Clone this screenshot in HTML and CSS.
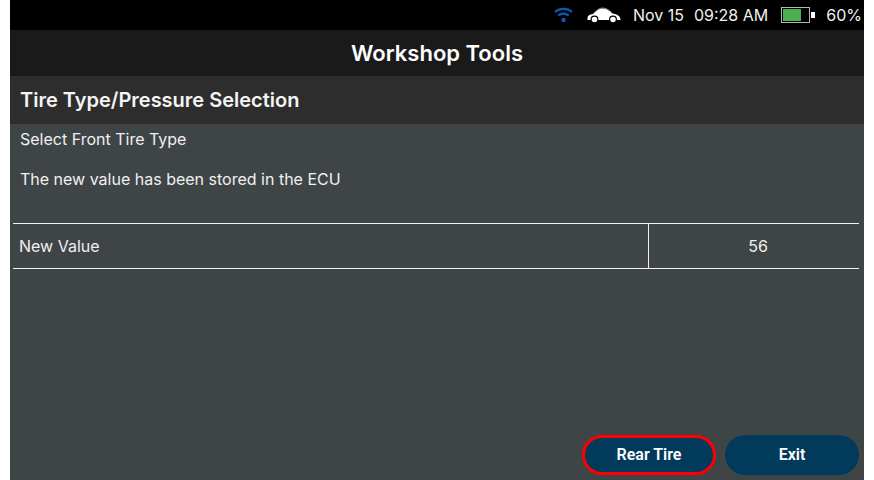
FILE: index.html
```html
<!DOCTYPE html>
<html lang="en">
<head>
    <meta charset="UTF-8">
    <meta name="viewport" content="width=device-width, initial-scale=1.0">
    <title>Workshop Tools</title>
    <link rel="stylesheet" href="styles.css">
</head>
<body>
    <div class="screen">
        <div class="status-bar">
            <svg class="wifi" width="19" height="16" viewBox="0 0 19 16">
                <path d="M1 5 C5.5 0.8 13.5 0.8 18 5" fill="none" stroke="#0a5bb0" stroke-width="2.2"/>
                <path d="M4.3 8.6 C7.3 6 11.7 6 14.7 8.6" fill="none" stroke="#0a5bb0" stroke-width="2.2"/>
                <circle cx="9.5" cy="13" r="2.2" fill="#0a5bb0"/>
            </svg>
            <svg class="car" width="34" height="16" viewBox="0 0 34 16">
                <path d="M0.5 11 C0.5 8.5 2.5 7.5 6 7 C8.5 4 11 1.5 15.5 1.5 C20 1.5 22.5 3.5 25.5 6.5 C30 7.2 33.5 9 33.5 12.5 L33.5 13 L0.5 13 Z" fill="#fff"/>
                <path d="M8 5.5 C10 3 12.5 1 15.5 1 C19 1 21.5 2.5 24 5" fill="none" stroke="#9a9a9a" stroke-width="0.8"/>
                <circle cx="7.5" cy="12.5" r="3.4" fill="#fff" stroke="#000" stroke-width="1.2"/>
                <circle cx="26" cy="12.5" r="3.4" fill="#fff" stroke="#000" stroke-width="1.2"/>
            </svg>
            <span class="date">Nov 15</span>
            <span class="time">09:28 AM</span>
            <div class="battery">
                <div class="battery-body">
                    <div class="battery-level"></div>
                </div>
                <div class="battery-tip"></div>
            </div>
            <span class="percent">60%</span>
        </div>
        <div class="title-bar">Workshop Tools</div>
        <div class="sub-header">Tire Type/Pressure Selection</div>
        <div class="content">
            <p class="line">Select Front Tire Type</p>
            <p class="line second">The new value has been stored in the ECU</p>
            <div class="value-row">
                <div class="value-name">New Value</div>
                <div class="value-num">56</div>
            </div>
            <div class="buttons">
                <button class="btn selected">Rear Tire</button>
                <button class="btn">Exit</button>
            </div>
        </div>
    </div>
</body>
</html>
```

FILE: styles.css
```css
html, body {
    height: 100%;
}
body {
    margin: 0;
    background: #fff;
    font-family: Inter, "Liberation Sans", sans-serif;
    color: #fff;
}
.screen {
    width: 854px;
    height: 480px;
    margin-left: 10px;
    display: flex;
    flex-direction: column;
    overflow: hidden;
}
.status-bar {
    height: 30px;
    background: #000;
    display: flex;
    align-items: center;
    justify-content: flex-end;
    padding-right: 2px;
    font-size: 16px;
    color: #f0f0f0;
}
.wifi {
    margin-right: 14px;
}
.car {
    margin-right: 12px;
}
.date {
    margin-right: 10px;
}
.time {
    margin-right: 13px;
}
.battery {
    display: flex;
    align-items: center;
    margin-right: 11px;
}
.battery-body {
    width: 29px;
    height: 16px;
    box-sizing: border-box;
    border: 1px solid #b5b5b5;
    padding: 1px;
    background: #000;
}
.battery-level {
    width: 72%;
    height: 100%;
    background: #4caf50;
}
.battery-tip {
    width: 4px;
    height: 6px;
    margin-left: 1px;
    background: #fff;
}
.title-bar {
    height: 46px;
    background: #1a1a1a;
    display: flex;
    align-items: center;
    justify-content: center;
    font-size: 22px;
    font-weight: 600;
}
.sub-header {
    height: 48px;
    background: #2d2d2d;
    display: flex;
    align-items: center;
    padding-left: 10px;
    font-size: 20px;
    font-weight: 600;
    color: #f4f4f4;
}
.content {
    flex: 1;
    background: #3f4447;
    display: flex;
    flex-direction: column;
    font-size: 16px;
    color: #f0f0f0;
}
.line {
    margin: 0;
    padding-left: 10px;
    line-height: 20px;
}
.line:first-child {
    margin-top: 5px;
}
.second {
    margin-top: 20px;
}
.value-row {
    margin: 34px 5px 0 3px;
    height: 46px;
    box-sizing: border-box;
    border-top: 1px solid #f2f2f2;
    border-bottom: 1px solid #f2f2f2;
    display: flex;
    align-items: center;
}
.value-name {
    width: 636px;
    height: 100%;
    display: flex;
    align-items: center;
    padding-left: 6px;
    box-sizing: border-box;
    border-right: 1px solid #f2f2f2;
}
.value-num {
    flex: 1;
    text-align: center;
    padding-left: 8px;
}
.buttons {
    margin-top: auto;
    display: flex;
    justify-content: flex-end;
    gap: 9px;
    padding: 0 5px 5px 0;
}
.btn {
    width: 134px;
    height: 40px;
    padding-bottom: 3px;
    border: none;
    border-radius: 20px;
    background: #023a5c;
    color: #fff;
    font-family: Roboto, sans-serif;
    font-size: 16px;
    font-weight: 600;
}
.selected {
    box-sizing: border-box;
    border: 3px solid #f00;
}
```
